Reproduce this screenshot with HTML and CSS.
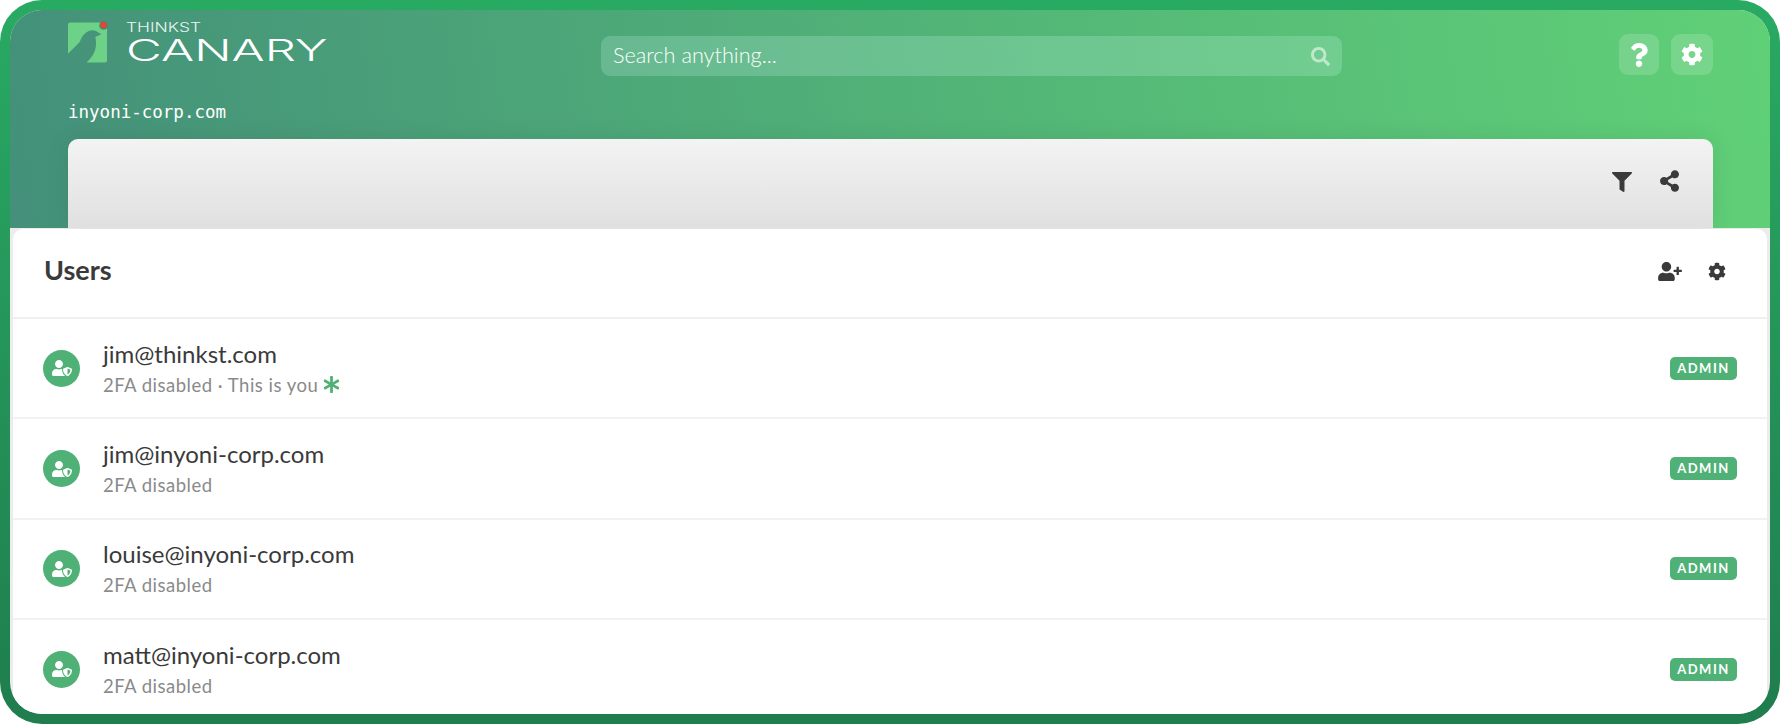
FILE: index.html
```html
<!DOCTYPE html>
<html lang="en" dir="ltr">
    <head>
        <meta charset="utf-8">
        <meta name="viewport" content="width=device-width, initial-scale=1.0">
        <link rel="stylesheet" href="styles.css">
        <title>Thinkst Canary - Users</title>
    </head>
    <body>
        <svg class="sprite" xmlns="http://www.w3.org/2000/svg">
            <symbol id="i-cog" viewBox="0 0 512 512"><path d="M487.4 315.7l-42.6-24.6c4.3-23.2 4.3-47 0-70.2l42.6-24.6c4.9-2.8 7.1-8.6 5.5-14-11.1-35.6-30-67.8-54.7-94.6-3.8-4.1-10-5.1-14.8-2.3L380.8 110c-17.9-15.4-38.5-27.3-60.8-35.1V25.8c0-5.6-3.9-10.5-9.4-11.7-36.7-8.2-74.3-7.8-109.2 0-5.5 1.2-9.4 6.1-9.4 11.7V75c-22.2 7.9-42.8 19.8-60.8 35.1L88.7 85.5c-4.9-2.8-11-1.9-14.8 2.3-24.7 26.7-43.6 58.9-54.7 94.6-1.7 5.4.6 11.2 5.5 14L67.3 221c-4.3 23.2-4.3 47 0 70.2l-42.6 24.6c-4.9 2.8-7.1 8.6-5.5 14 11.1 35.6 30 67.8 54.7 94.6 3.8 4.1 10 5.1 14.8 2.3l42.6-24.6c17.9 15.4 38.5 27.3 60.8 35.1v49.2c0 5.6 3.9 10.5 9.4 11.7 36.7 8.2 74.3 7.8 109.2 0 5.5-1.2 9.4-6.1 9.4-11.7v-49.2c22.2-7.9 42.8-19.8 60.8-35.1l42.6 24.6c4.9 2.8 11 1.9 14.8-2.3 24.7-26.7 43.6-58.9 54.7-94.6 1.5-5.5-.7-11.3-5.6-14.1zM256 336c-44.1 0-80-35.9-80-80s35.9-80 80-80 80 35.9 80 80-35.9 80-80 80z"/></symbol>
            <symbol id="i-filter" viewBox="0 0 512 512"><path d="M487.976 0H24.028C2.71 0-8.047 25.866 7.058 40.971L192 225.941V432c0 7.831 3.821 15.17 10.237 19.662l80 55.98C298.02 518.69 320 507.493 320 487.98V225.941l184.947-184.97C520.021 25.896 509.338 0 487.976 0z"/></symbol>
            <symbol id="i-share" viewBox="0 0 448 512"><path d="M352 320c-22.608 0-43.387 7.819-59.79 20.895l-102.486-64.054a96.551 96.551 0 0 0 0-41.683l102.486-64.054C308.613 184.181 329.392 192 352 192c53.019 0 96-42.981 96-96S405.019 0 352 0s-96 42.981-96 96c0 7.158.79 14.13 2.276 20.841L155.79 180.895C139.387 167.819 118.608 160 96 160c-53.019 0-96 42.981-96 96s42.981 96 96 96c22.608 0 43.387-7.819 59.79-20.895l102.486 64.054A96.301 96.301 0 0 0 256 416c0 53.019 42.981 96 96 96s96-42.981 96-96-42.981-96-96-96z"/></symbol>
            <symbol id="i-search" viewBox="0 0 512 512"><path d="M505 442.7L405.3 343c-4.5-4.5-10.6-7-17-7H372c27.6-35.3 44-79.7 44-128C416 93.1 322.9 0 208 0S0 93.1 0 208s93.1 208 208 208c48.3 0 92.7-16.4 128-44v16.3c0 6.4 2.5 12.5 7 17l99.7 99.7c9.4 9.4 24.6 9.4 33.9 0l28.3-28.3c9.4-9.4 9.4-24.6.1-34zM208 336c-70.7 0-128-57.2-128-128 0-70.7 57.2-128 128-128 70.7 0 128 57.2 128 128 0 70.7-57.2 128-128 128z"/></symbol>
            <symbol id="i-question" viewBox="0 0 384 512"><path d="M202.021 0C122.202 0 70.503 32.703 29.914 91.026c-7.363 10.58-5.093 25.086 5.178 32.874l43.138 32.709c10.373 7.865 25.132 6.026 33.253-4.148 25.049-31.381 43.63-49.449 82.757-49.449 30.764 0 68.816 19.799 68.816 49.631 0 22.552-18.617 34.134-48.993 51.164-35.423 19.86-82.299 44.576-82.299 106.405V320c0 13.255 10.745 24 24 24h72.471c13.255 0 24-10.745 24-24v-5.773c0-42.86 125.268-44.645 125.268-160.627C377.504 66.256 286.902 0 202.021 0zM192 373.459c-38.196 0-69.271 31.075-69.271 69.271 0 38.195 31.075 69.27 69.271 69.27s69.271-31.075 69.271-69.271-31.075-69.27-69.271-69.27z"/></symbol>
            <symbol id="i-user-plus" viewBox="0 0 640 512"><path d="M624 208h-64v-64c0-8.8-7.2-16-16-16h-32c-8.8 0-16 7.2-16 16v64h-64c-8.8 0-16 7.2-16 16v32c0 8.8 7.2 16 16 16h64v64c0 8.8 7.2 16 16 16h32c8.8 0 16-7.2 16-16v-64h64c8.8 0 16-7.2 16-16v-32c0-8.8-7.2-16-16-16zm-400 48c70.7 0 128-57.3 128-128S294.7 0 224 0 96 57.3 96 128s57.3 128 128 128zm89.6 32h-16.7c-22.2 10.2-46.9 16-72.9 16s-50.6-5.8-72.9-16h-16.7C60.2 288 0 348.2 0 422.4V464c0 26.5 21.5 48 48 48h352c26.5 0 48-21.5 48-48v-41.6c0-74.2-60.2-134.4-134.4-134.4z"/></symbol>
            <symbol id="i-user-shield" viewBox="0 0 640 512"><path d="M622.3 271.1l-115.2-45c-4.1-1.6-12.6-3.7-22.2 0l-115.2 45c-10.7 4.2-17.7 14-17.7 24.9 0 111.6 68.7 188.8 132.9 213.9 9.6 3.7 18 1.6 22.2 0C558.4 489.9 640 420.5 640 296c0-10.9-7-20.7-17.7-24.9zM496 462.4V273.3l95.5 37.3c-5.6 87.1-60.9 135.4-95.5 151.8zM224 256c70.7 0 128-57.3 128-128S294.7 0 224 0 96 57.3 96 128s57.3 128 128 128zm96 40c0-2.5.8-4.8 1.1-7.2-2.5-.1-4.9-.8-7.5-.8h-16.7c-22.2 10.2-46.9 16-72.9 16s-50.6-5.8-72.9-16h-16.7C60.2 288 0 348.2 0 422.4V464c0 26.5 21.5 48 48 48h352c6.8 0 13.3-1.5 19.2-4-54-42.9-99.2-116.7-99.2-212z"/></symbol>
            <symbol id="i-asterisk" viewBox="0 0 512 512"><path d="M478.21 334.093L336 256l142.21-78.093c11.795-6.477 15.961-21.384 9.232-33.037l-19.48-33.741c-6.728-11.653-21.72-15.499-33.227-8.523L296 186.718l3.475-162.204C299.763 11.061 288.937 0 275.48 0h-38.96c-13.456 0-24.283 11.061-23.994 24.514L216 186.718 77.265 102.607c-11.506-6.976-26.499-3.13-33.227 8.523l-19.48 33.741c-6.728 11.653-2.562 26.56 9.233 33.037L176 256 33.79 334.093c-11.795 6.477-15.961 21.384-9.232 33.037l19.48 33.741c6.728 11.653 21.721 15.499 33.227 8.523L216 325.282l-3.475 162.204C212.237 500.939 223.064 512 236.52 512h38.961c13.456 0 24.283-11.061 23.995-24.514L296 325.282l138.735 84.111c11.506 6.976 26.499 3.13 33.227-8.523l19.48-33.741c6.728-11.653 2.563-26.559-9.232-33.036z"/></symbol>
        </svg>

        <div class="frame">
            <div class="window">
                <header class="topbar">
                    <div class="topbar-row">
                        <div class="logo">
                            <svg class="logo-mark" viewBox="0 0 42 42">
                                <path d="M2 1H40V40a2 2 0 0 1-2 2H19C28 34 30 26 28 16L34 13C31 11 28 9 25 9C20 9 15 13 12 21L0 33V3a2 2 0 0 1 2-2Z" fill="#6dd187"/>
                                <circle cx="36.500" cy="4" r="4.500" fill="#3f8f72"/>
                                <circle cx="36.500" cy="3.500" r="3.300" fill="#ea4335"/>
                            </svg>
                            <div class="logo-text">
                                <span class="logo-small">THINKST</span>
                                <span class="logo-big">CANARY</span>
                            </div>
                        </div>
                        <div class="search">
                            <span class="search-text">Search anything...</span>
                            <svg class="search-icon"><use href="#i-search"/></svg>
                        </div>
                        <div class="top-buttons">
                            <div class="top-button help"><svg><use href="#i-question"/></svg></div>
                            <div class="top-button settings"><svg><use href="#i-cog"/></svg></div>
                        </div>
                    </div>
                    <div class="domain">inyoni-corp.com</div>
                    <div class="toolcard">
                        <svg class="tool-filter"><use href="#i-filter"/></svg>
                        <svg class="tool-share"><use href="#i-share"/></svg>
                    </div>
                </header>

                <main class="panel">
                    <div class="panel-head">
                        <h1 class="panel-title">Users</h1>
                        <svg class="head-add"><use href="#i-user-plus"/></svg>
                        <svg class="head-cog"><use href="#i-cog"/></svg>
                    </div>

                    <div class="user-row">
                        <div class="avatar"><svg><use href="#i-user-shield"/></svg></div>
                        <div class="user-info">
                            <div class="user-mail">jim@thinkst.com</div>
                            <div class="user-sub">2FA disabled · This is you <svg class="you-mark"><use href="#i-asterisk"/></svg></div>
                        </div>
                        <span class="badge">ADMIN</span>
                    </div>
                    <div class="user-row">
                        <div class="avatar"><svg><use href="#i-user-shield"/></svg></div>
                        <div class="user-info">
                            <div class="user-mail">jim@inyoni-corp.com</div>
                            <div class="user-sub">2FA disabled</div>
                        </div>
                        <span class="badge">ADMIN</span>
                    </div>
                    <div class="user-row">
                        <div class="avatar"><svg><use href="#i-user-shield"/></svg></div>
                        <div class="user-info">
                            <div class="user-mail">louise@inyoni-corp.com</div>
                            <div class="user-sub">2FA disabled</div>
                        </div>
                        <span class="badge">ADMIN</span>
                    </div>
                    <div class="user-row">
                        <div class="avatar"><svg><use href="#i-user-shield"/></svg></div>
                        <div class="user-info">
                            <div class="user-mail">matt@inyoni-corp.com</div>
                            <div class="user-sub">2FA disabled</div>
                        </div>
                        <span class="badge">ADMIN</span>
                    </div>
                </main>
            </div>
        </div>
    </body>
</html>
```

FILE: styles.css
```css
body {
  margin: 0;
  background-color: white;
  color: #3a3a3a;
  font-family: Lato, "Open Sans", Arial, sans-serif;
  overflow: hidden;
}
.sprite {
  display: none;
}
svg {
  fill: currentColor;
  display: block;
}
.frame {
  box-sizing: border-box;
  width: 1780px;
  height: 724px;
  padding: 10px;
  border-radius: 42px;
  background: linear-gradient(180deg, #29aa63, #1f7d4e);
}
.window {
  height: 704px;
  border-radius: 32px;
  overflow: hidden;
  background-color: #ececec;
  display: flex;
  flex-direction: column;
}

/* green header */
.topbar {
  box-sizing: border-box;
  height: 218px;
  flex: none;
  padding: 11px 57px 0 58px;
  background: linear-gradient(82deg, #44907a 0%, #52b577 55%, #60d077 100%);
  display: flex;
  flex-direction: column;
}
.topbar-row {
  display: grid;
  grid-template-columns: 533px 741px 1fr;
  align-items: start;
}
.logo {
  display: flex;
  gap: 17px;
}
.logo-mark {
  width: 41px;
  height: 42px;
}
.logo-text {
  display: flex;
  flex-direction: column;
  color: white;
  line-height: 1;
}
.logo-small {
  font-family: Inter, sans-serif;
  font-weight: 300;
  font-size: 13px;
  height: 14px;
  transform: scaleX(1.34);
  transform-origin: left;
  opacity: 0.9;
}
.logo-big {
  font-family: Inter, sans-serif;
  font-weight: 300;
  font-size: 30px;
  height: 30px;
  transform: scaleX(1.64);
  transform-origin: left;
}
.search {
  box-sizing: border-box;
  height: 40px;
  margin-top: 15px;
  padding: 0 12px;
  border-radius: 9px;
  background-color: rgba(215, 255, 245, 0.2);
  color: white;
  font-size: 21.700px;
  font-weight: 300;
  display: flex;
  align-items: center;
  justify-content: space-between;
}
.search-text {
  margin-bottom: 2px;
}
.search-icon {
  width: 19px;
  height: 19px;
  color: rgba(255, 255, 255, 0.55);
}
.top-buttons {
  display: flex;
  justify-content: flex-end;
  gap: 12px;
  margin-top: 13px;
}
.top-button {
  height: 41px;
  border-radius: 9px;
  background-color: rgba(255, 255, 255, 0.16);
  color: white;
  display: flex;
  align-items: center;
  justify-content: center;
}
.help {
  width: 40px;
}
.help svg {
  width: 18px;
  height: 24px;
}
.settings {
  width: 42px;
}
.settings svg {
  width: 22px;
  height: 23px;
}
.domain {
  margin-top: 24px;
  color: white;
  font-family: "DejaVu Sans Mono", monospace;
  font-size: 17.500px;
  line-height: 24px;
}
.toolcard {
  flex: 1;
  margin-top: 15px;
  border-radius: 10px 10px 0 0;
  background: linear-gradient(180deg, #f3f3f3, #e0e0e0);
  box-shadow: 0 0 24px rgba(0, 0, 0, 0.08);
  color: #3a3a3a;
  display: flex;
  justify-content: flex-end;
  align-items: flex-start;
  padding: 33px 34px 0 0;
  gap: 28px;
}
.tool-filter {
  width: 20px;
  height: 20px;
}
.tool-share {
  width: 19px;
  height: 22px;
  margin-top: -2px;
}

/* users list */
.panel {
  flex: 1;
  margin: 1px 3px 0;
  border-radius: 10px 10px 0 0;
  background-color: white;
  overflow: hidden;
}
.panel-head {
  box-sizing: border-box;
  height: 90px;
  padding: 0 41px 4px 31px;
  border-bottom: 2px solid #f0f0f0;
  display: flex;
  align-items: center;
  color: #3a3a3a;
}
.panel-title {
  flex: 1;
  margin: 0 0 3px;
  font-size: 27px;
  font-weight: 700;
}
.head-add {
  width: 24px;
  height: 19px;
}
.head-cog {
  width: 18px;
  height: 19px;
  margin-left: 26px;
}
.user-row {
  box-sizing: border-box;
  height: 100.400px;
  padding: 0 30px 0 30px;
  border-bottom: 2px solid #f2f2f2;
  display: flex;
  align-items: center;
}
.avatar {
  width: 37px;
  height: 37px;
  border-radius: 50%;
  background-color: #4fb176;
  color: white;
  display: flex;
  align-items: center;
  justify-content: center;
}
.avatar svg {
  width: 20px;
  height: 16px;
}
.user-info {
  flex: 1;
  margin-left: 23px;
}
.user-mail {
  font-size: 24px;
  line-height: 30px;
  color: #3a3a3a;
}
.user-sub {
  margin-top: 3px;
  font-size: 18.500px;
  letter-spacing: 0.500px;
  line-height: 26px;
  color: #8a8a8a;
  display: flex;
  align-items: center;
  gap: 5px;
}
.you-mark {
  width: 17px;
  height: 17px;
  color: #4fb176;
}
.badge {
  width: 67px;
  height: 23px;
  border-radius: 5px;
  background-color: #4fb176;
  color: white;
  font-size: 13px;
  font-weight: 700;
  letter-spacing: 1.500px;
  text-align: center;
  line-height: 23px;
}
```
